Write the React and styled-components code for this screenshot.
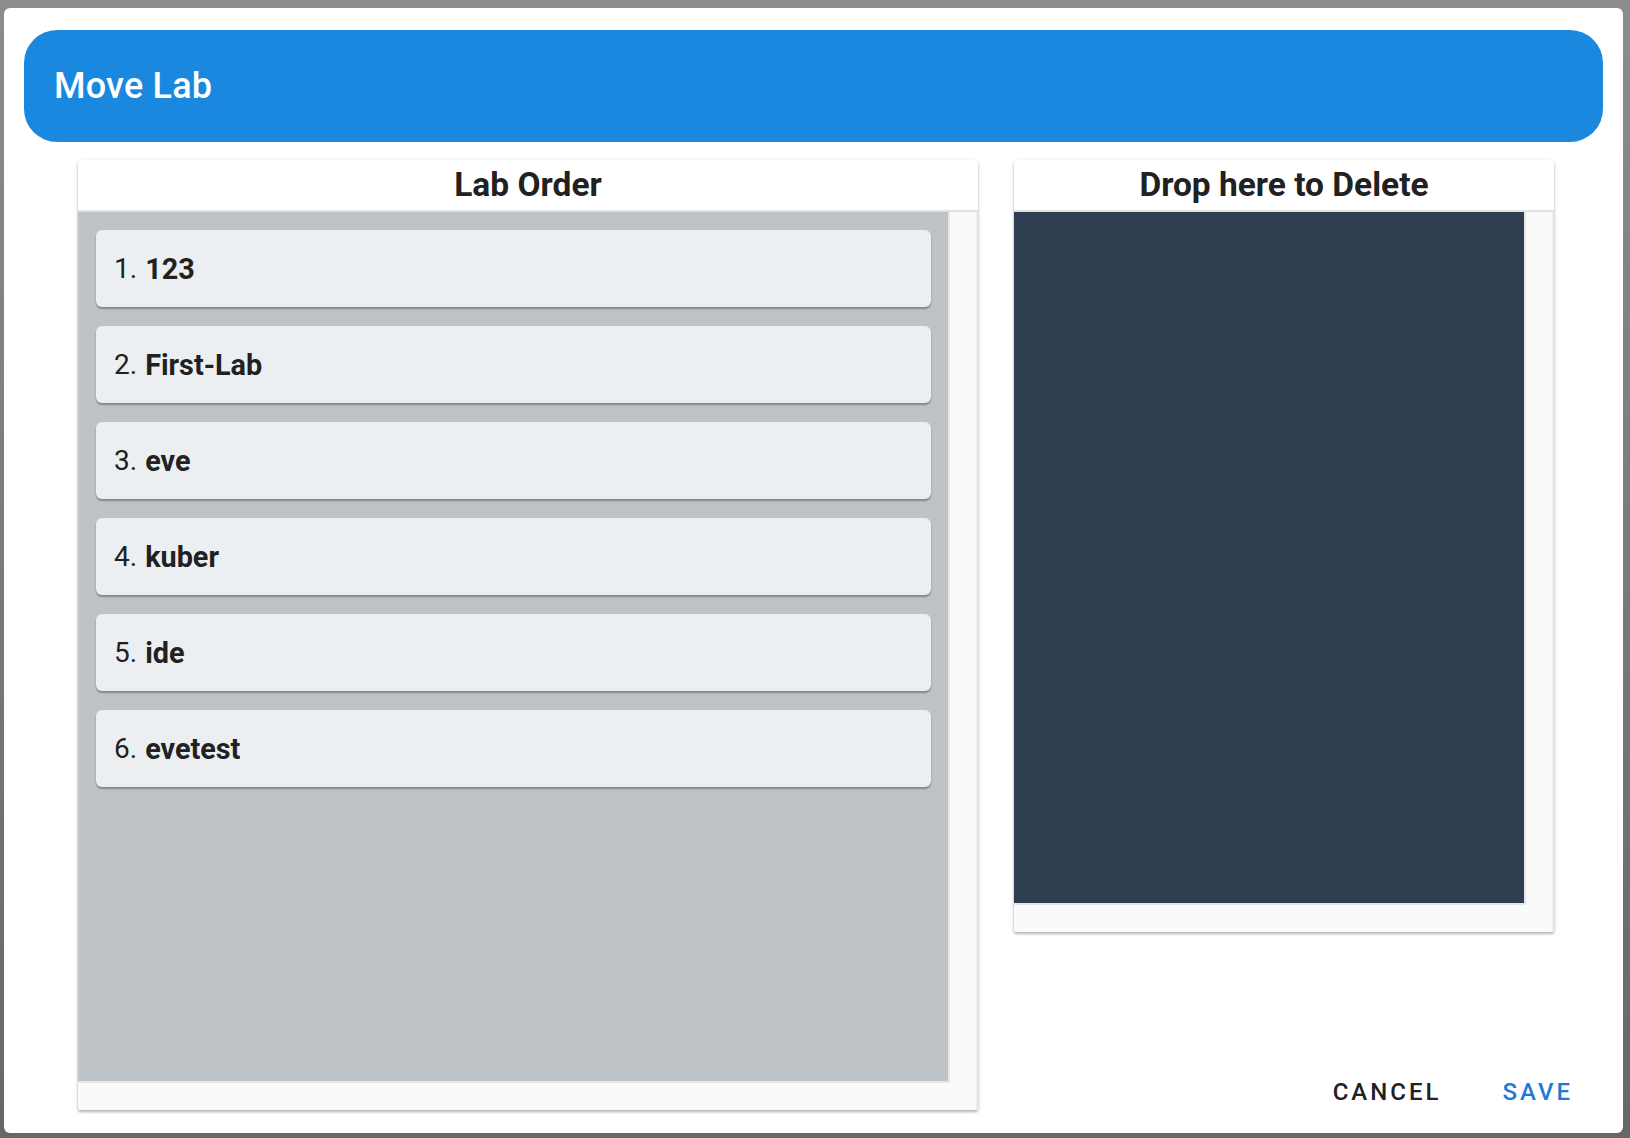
import React from 'react';
import styled, { createGlobalStyle } from 'styled-components';

const GlobalStyle = createGlobalStyle`
  html, body {
    margin: 0;
    padding: 0;
    height: 100%;
  }
  body {
    font-family: Roboto, "Noto Sans", "Liberation Sans", sans-serif;
    color: #212121;
  }
`;

const Backdrop = styled.div`
  width: 1630px;
  height: 1138px;
  box-sizing: border-box;
  padding: 8px 7px 5px 4px;
  background: linear-gradient(180deg, #8c8c8c 0%, #7a7a7a 50%, #676767 100%);
`;

const Dialog = styled.div`
  height: 100%;
  box-sizing: border-box;
  background: #ffffff;
  border-radius: 6px;
  padding: 22px 20px 23px;
  display: flex;
  flex-direction: column;
  gap: 18px;
`;

const TitleBar = styled.div`
  height: 112px;
  flex-shrink: 0;
  box-sizing: border-box;
  background: #1b88e0;
  border-radius: 33px;
  display: flex;
  align-items: center;
  padding-left: 30px;
  color: #ffffff;
  font-size: 36px;
  font-weight: 500;
  letter-spacing: 0.2px;
`;

const Body = styled.div`
  flex: 1;
  display: flex;
  gap: 36px;
  padding-left: 54px;
  min-height: 0;
`;

const Card = styled.div`
  width: ${(p) => p.width}px;
  ${(p) => p.height && `height: ${p.height}px;`}
  flex-shrink: 0;
  display: flex;
  flex-direction: column;
  background: #fafafa;
  border-radius: 5px 5px 2px 2px;
  box-shadow: 0 2px 3px rgba(0, 0, 0, 0.28), 0 0 4px rgba(0, 0, 0, 0.08);
  overflow: hidden;
`;

const CardHeader = styled.div`
  height: 48px;
  flex-shrink: 0;
  padding-bottom: 2px;
  background: #ffffff;
  border-bottom: 2px solid #e2e2e2;
  display: flex;
  align-items: center;
  justify-content: center;
  font-size: 33.5px;
  font-weight: 700;
  color: #212121;
`;

const Scroller = styled.div`
  flex: 1;
  display: flex;
  padding: 0 26px 27px 0;
  border-right: 2px solid #ececec;
  min-height: 0;
`;

const Pane = styled.div`
  flex: 1;
  background: ${(p) => p.bg};
  border-right: 2px solid #e6e6e6;
  border-bottom: 2px solid #e6e6e6;
  display: flex;
  flex-direction: column;
  gap: 19px;
  padding: 18px 17px 18px 18px;
`;

const Item = styled.div`
  height: 77px;
  flex-shrink: 0;
  box-sizing: border-box;
  background: #eceff1;
  border-radius: 6px;
  box-shadow: 0 2px 2px rgba(0, 0, 0, 0.32);
  display: flex;
  align-items: center;
  padding-left: 18px;
  font-size: 28px;
  color: #212121;

  b {
    font-weight: 700;
    font-size: 28.8px;
    margin-left: 8px;
  }
`;

const SideColumn = styled.div`
  flex: 1;
  display: flex;
  flex-direction: column;
  justify-content: space-between;
`;

const Actions = styled.div`
  display: flex;
  justify-content: flex-end;
  align-items: center;
  gap: 29px;
  padding: 0 14px 0 0;
  margin-bottom: -2px;
`;

const ActionButton = styled.button`
  border: none;
  background: transparent;
  padding: 6px 16px;
  font-family: Roboto, "Noto Sans", "Liberation Sans", sans-serif;
  font-size: 24px;
  font-weight: 500;
  letter-spacing: 3px;
  text-transform: uppercase;
  color: ${(p) => (p.primary ? '#1e79d6' : '#212121')};
  cursor: pointer;
`;

const labs = ['123', 'First-Lab', 'eve', 'kuber', 'ide', 'evetest'];

export default function App() {
  return (
    <>
      <GlobalStyle />
      <Backdrop>
        <Dialog>
          <TitleBar>Move Lab</TitleBar>
          <Body>
            <Card width={900}>
              <CardHeader>Lab Order</CardHeader>
              <Scroller>
                <Pane bg="#bec3c7">
                  {labs.map((name, i) => (
                    <Item key={name}>
                      {i + 1}.<b>{name}</b>
                    </Item>
                  ))}
                </Pane>
              </Scroller>
            </Card>
            <SideColumn>
              <Card width={540} height={772}>
                <CardHeader>Drop here to Delete</CardHeader>
                <Scroller>
                  <Pane bg="#2e3e50" />
                </Scroller>
              </Card>
              <Actions>
                <ActionButton>Cancel</ActionButton>
                <ActionButton primary>Save</ActionButton>
              </Actions>
            </SideColumn>
          </Body>
        </Dialog>
      </Backdrop>
    </>
  );
}
